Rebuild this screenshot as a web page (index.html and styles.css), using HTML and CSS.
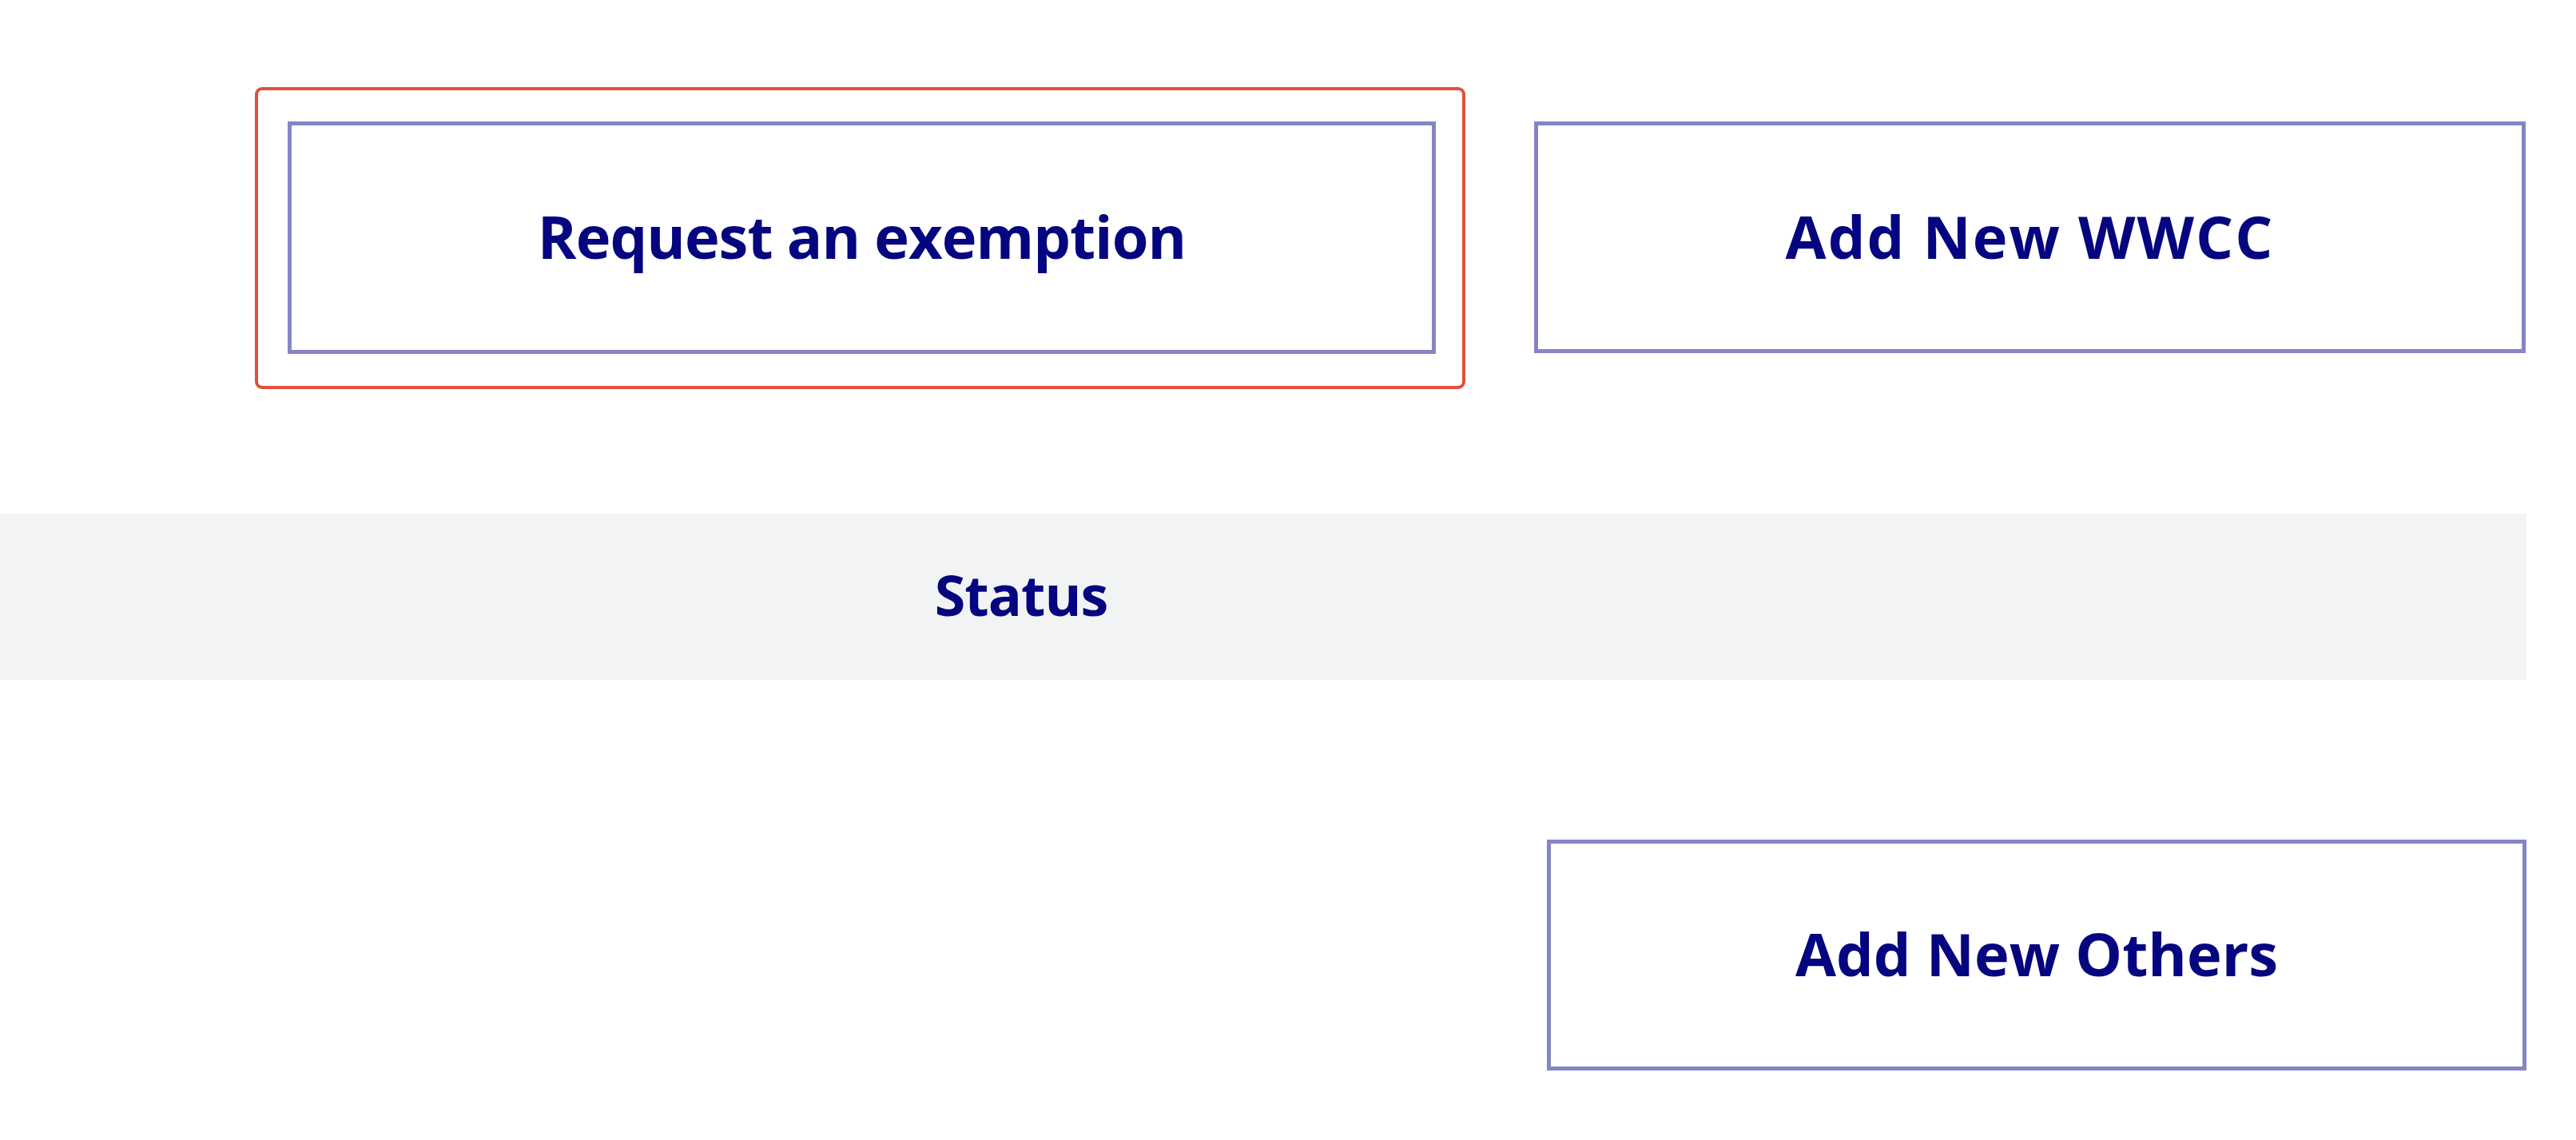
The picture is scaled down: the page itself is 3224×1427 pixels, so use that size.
FILE: index.html
```html
<!DOCTYPE html>
<html lang="en">
<head>
<meta charset="utf-8">
<title>Actions</title>
<link rel="stylesheet" href="styles.css">
</head>
<body>
<main class="page">
  <div class="top-row">
    <div class="focus-ring">
      <button class="action-btn btn-exemption">Request an exemption</button>
    </div>
    <button class="action-btn btn-wwcc">Add New WWCC</button>
  </div>
  <div class="table-head">
    <div class="th th-status">Status</div>
    <div class="th"></div>
  </div>
  <div class="bottom-row">
    <button class="action-btn btn-others">Add New Others</button>
  </div>
</main>
</body>
</html>
```
FILE: styles.css
```css
html, body {
  margin: 0;
  padding: 0;
  background: #ffffff;
}

body {
  font-family: "Open Sans", "Liberation Sans", sans-serif;
  width: 3224px;
  height: 1427px;
  overflow: hidden;
}

.page {
  width: 3162px;
  padding-top: 109px;
  display: flex;
  flex-direction: column;
}

.top-row {
  display: flex;
  align-items: flex-start;
  padding-left: 319px;
  gap: 86px;
}

.focus-ring {
  border: 4px solid #e2503a;
  border-radius: 9px;
  padding: 39px 33px 40px 37px;
  box-sizing: border-box;
  width: 1515px;
  height: 378px;
}

.action-btn {
  display: flex;
  align-items: center;
  justify-content: center;
  box-sizing: border-box;
  background: #ffffff;
  border: 5px solid #8585c4;
  font-family: "Open Sans", "Liberation Sans", sans-serif;
  font-weight: 700;
  font-size: 74px;
  letter-spacing: -1px;
  color: #050580;
  padding: 0 0 4px 0;
  margin: 0;
  cursor: pointer;
}

.btn-exemption {
  width: 1437px;
  height: 291px;
}

.btn-wwcc {
  margin-top: 43px;
  width: 1241px;
  height: 290px;
  letter-spacing: 2px;
}

.table-head {
  margin-top: 156px;
  height: 208px;
  background: #f2f3f5;
  display: grid;
  grid-template-columns: 2556px 1fr;
  align-items: center;
}

.th {
  text-align: center;
  font-weight: 700;
  font-size: 70px;
  letter-spacing: -1px;
  color: #050580;
  padding-bottom: 6px;
}

.bottom-row {
  display: flex;
  justify-content: flex-end;
  margin-top: 200px;
}

.btn-others {
  width: 1226px;
  height: 289px;
  letter-spacing: 0;
}
```
